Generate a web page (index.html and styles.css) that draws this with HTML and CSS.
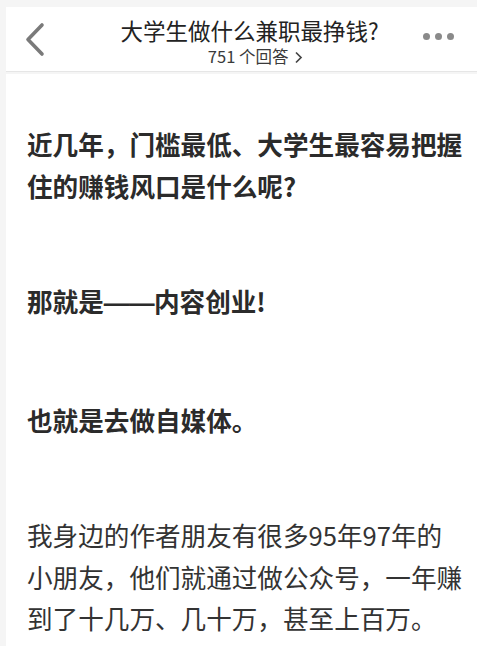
FILE: index.html
```html
<!DOCTYPE html>
<html lang="zh-CN">
<head>
<meta charset="utf-8">
<link rel="stylesheet" href="styles.css">
</head>
<body>
<div class="page">
  <header class="bar">
    <div class="back">
      <svg width="24" height="36" viewBox="0 0 24 36"><polyline points="18,3 4,17.5 18,32" fill="none" stroke="#7a7a7a" stroke-width="3.6" stroke-linecap="round" stroke-linejoin="round"/></svg>
    </div>
    <div class="titles">
      <div class="title">大学生做什么兼职最挣钱?</div>
      <div class="sub">751 个回答 <svg class="chev" width="9" height="13" viewBox="0 0 9 13"><polyline points="2,1.5 7,6.5 2,11.5" fill="none" stroke="#444" stroke-width="1.7"/></svg></div>
    </div>
    <div class="more">
      <span class="dot"></span><span class="dot"></span><span class="dot"></span>
    </div>
  </header>
  <main class="content">
    <p class="strong">近几年，门槛最低、大学生最容易把握住的赚钱风口是什么呢?</p>
    <p class="strong">那就是<span class="dash">——</span>内容创业!</p>
    <p class="strong">也就是去做自媒体。</p>
    <p>我身边的作者朋友有很多95年97年的小朋友，他们就通过做公众号，一年赚到了十几万、几十万，甚至上百万。</p>
  </main>
</div>
</body>
</html>
```
FILE: styles.css
```css
html, body {
  margin: 0;
  padding: 0;
}
body {
  background: #f5f5f5;
  font-family: "Noto Sans CJK SC", "Noto Sans", sans-serif;
  color: #333;
  height: 646px;
  overflow: hidden;
}
.page {
  margin-left: 6px;
  padding-top: 7px;
}
.bar {
  display: flex;
  height: 64px;
  background: #fff;
  border-bottom: 1px solid #e6e6e6;
}
.back {
  width: 60px;
  padding: 15px 0 0 18px;
  box-sizing: border-box;
}
.back svg {
  display: block;
}
.titles {
  flex: 1;
  text-align: center;
  padding-left: 16px;
  padding-top: 10px;
}
.title {
  font-size: 22.5px;
  line-height: 26px;
  color: #222;
}
.sub {
  font-size: 16.5px;
  line-height: 20px;
  color: #3a3a3a;
  padding-left: 12px;
  margin-top: 3px;
}
.chev {
  vertical-align: -1px;
  margin-left: 2px;
}
.more {
  width: 60px;
  display: flex;
  gap: 5px;
  padding: 26px 0 0 6px;
  box-sizing: border-box;
}
.dot {
  width: 7px;
  height: 7px;
  border-radius: 50%;
  background: #8a8a8a;
}
.content {
  background: #fff;
  padding: 1px 12px 40px 21px;
  margin-top: 2px;
}
.content p {
  margin: 0 0 74px 0;
  font-size: 25.6px;
  line-height: 41.5px;
  color: #333;
}
.content p:first-child {
  margin-top: 48px;
}
.content p.strong {
  font-weight: 700;
  color: #2b2b2b;
}
.dash {
  font-family: "Liberation Sans", sans-serif;
  font-weight: 700;
  letter-spacing: -0.5px;
}
```
